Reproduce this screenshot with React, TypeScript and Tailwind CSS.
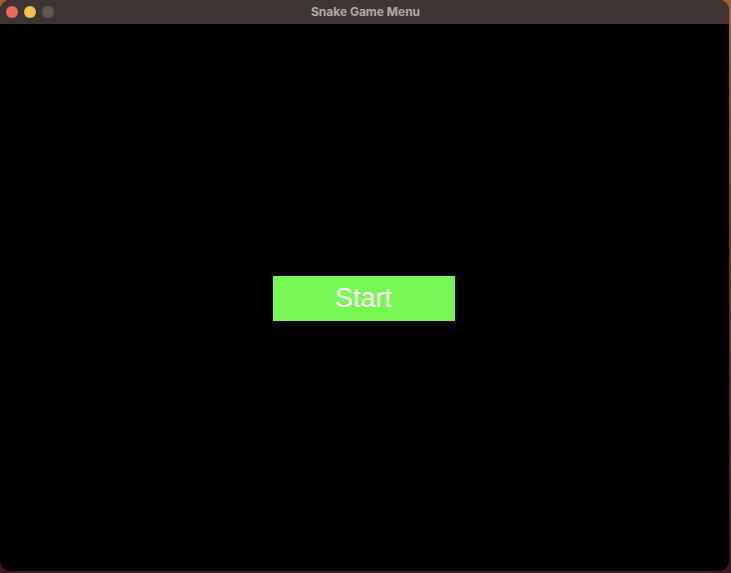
const App = () => {
  return (
    <div className="w-[731px] h-[573px] bg-gradient-to-b from-[#a8602a] via-[#6a2a1c] to-[#3a1822] overflow-hidden">
      <div className="w-[729px] h-[571px] rounded-[10px] overflow-hidden flex flex-col bg-black">
        {/* title bar */}
        <div className="relative h-[24px] bg-[#3d3533] flex items-center justify-center shrink-0">
          <div className="absolute left-[6px] top-[6px] flex gap-[6px]">
            <div className="w-[12px] h-[12px] rounded-full bg-[#ec6a5e]" />
            <div className="w-[12px] h-[12px] rounded-full bg-[#f4bf4f]" />
            <div className="w-[12px] h-[12px] rounded-full bg-[#5c5756]" />
          </div>
          <span className="text-[12px] font-bold text-[#b3aba8] font-['Inter',sans-serif] pl-[2px]">
            Snake Game Menu
          </span>
        </div>

        {/* canvas */}
        <div className="flex-1 flex items-center justify-center pt-[2px] pr-[2px]">
          <button className="w-[182px] h-[45px] bg-[#77f753] text-white text-[27px] font-['Liberation_Sans',Arial,sans-serif] leading-none flex items-center justify-center">
            Start
          </button>
        </div>
      </div>
    </div>
  );
};

export default App;
